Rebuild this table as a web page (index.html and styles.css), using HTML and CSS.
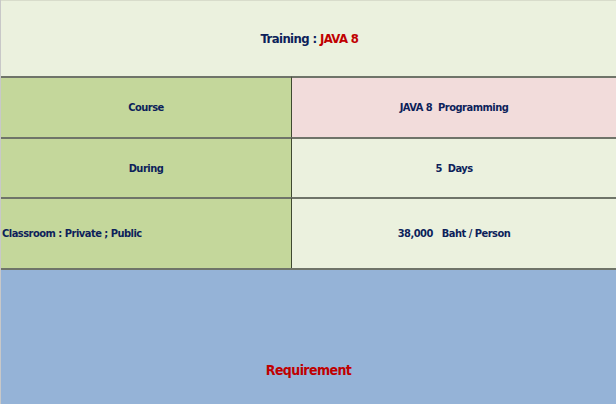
FILE: index.html
```html
<!DOCTYPE html>
<html>
<head>
<meta charset="utf-8">
<link rel="stylesheet" href="styles.css">
</head>
<body>
<div class="sheet">
  <div class="title"><span>Training : <span class="red">JAVA 8</span></span></div>
  <div class="grid">
    <div class="cell label r1">Course</div>
    <div class="cell value pink r1">JAVA 8&nbsp; Programming</div>
    <div class="cell label r2">During</div>
    <div class="cell value r2">5&nbsp; Days</div>
    <div class="cell label left r3">Classroom : Private ; Public</div>
    <div class="cell value r3">38,000&nbsp;&nbsp; Baht / Person</div>
  </div>
  <div class="req"><span class="req-text">Requirement</span></div>
</div>
</body>
</html>
```
FILE: styles.css
```css
html, body {
  margin: 0;
  padding: 0;
  width: 616px;
  height: 404px;
  overflow: hidden;
}
.sheet {
  width: 616px;
  height: 404px;
  display: flex;
  flex-direction: column;
  font-family: "DejaVu Sans Condensed", "DejaVu Sans", sans-serif;
  font-stretch: condensed;
  font-weight: bold;
  color: #0d1f5a;
  border-left: 1px solid #c8c8c8;
  box-sizing: border-box;
}
.title {
  border-top: 1px solid #d8dccb;
  background: #ebf1de;
  display: flex;
  align-items: center;
  justify-content: center;
  font-size: 13px;
  letter-spacing: -0.6px;
  box-sizing: border-box;
  height: 76px;
  padding-left: 2px;
}
.red { color: #c00000; }
.grid {
  display: grid;
  grid-template-columns: 291px 1fr;
  grid-template-rows: 61px 60px 71px;
}
.cell {
  display: flex;
  align-items: center;
  justify-content: center;
  font-size: 11px;
  letter-spacing: -0.5px;
  border-top: 2px solid #6f7469;
  box-sizing: border-box;
}
.label {
  background: #c4d79b;
  border-right: 1px solid #3f4a30;
}
.value { background: #ebf1de; }
.pink { background: #f2dcdb; }
.left { justify-content: flex-start; padding-left: 1px; }
.req {
  flex: 1;
  background: #95b3d7;
  border-top: 2px solid #6f7469;
  display: flex;
  justify-content: center;
  padding-top: 92px;
  box-sizing: border-box;
}
.req-text {
  color: #c00000;
  font-size: 14px;
  letter-spacing: -0.6px;
  line-height: 17px;
}
```
